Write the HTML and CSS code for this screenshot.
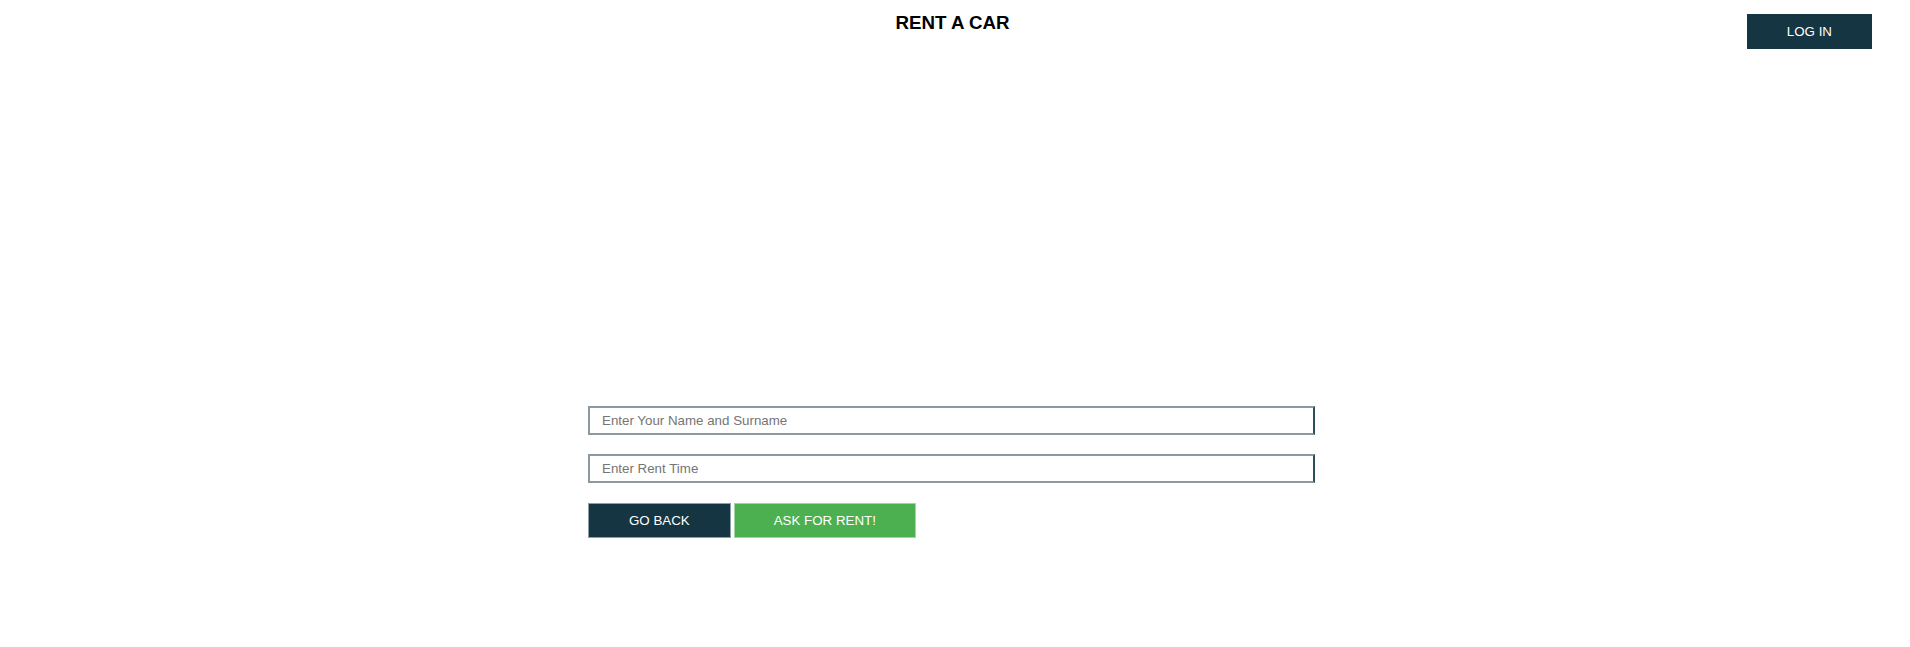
FILE: index.html
```html
<!DOCTYPE html>
<html lang="en">
<head>
<meta charset="utf-8">
<title>Rent a Car</title>
<link rel="stylesheet" href="styles.css">
</head>
<body>
<div class="page">
  <header class="topbar">
    <div class="spacer"></div>
    <h3 class="title">RENT A CAR</h3>
    <div class="actions">
      <button class="btn btn-dark btn-login" type="button">LOG IN</button>
    </div>
  </header>
  <main class="main">
    <form class="rent-form">
      <input class="field" type="text" placeholder="Enter Your Name and Surname">
      <input class="field" type="text" placeholder="Enter Rent Time">
      <div class="buttons">
        <button class="btn btn-dark btn-bordered" type="button">GO BACK</button>
        <button class="btn btn-green btn-bordered" type="button">ASK FOR RENT!</button>
      </div>
    </form>
  </main>
</div>
</body>
</html>
```

FILE: styles.css
```css
html, body {
  margin: 0;
  padding: 0;
  background: #ffffff;
}

body {
  font-family: "Liberation Sans", Arial, sans-serif;
  color: #000000;
}

.page {
  padding-right: 7px;
}

.topbar {
  display: grid;
  grid-template-columns: 1fr auto 1fr;
  align-items: start;
  padding: 14px 31px 0 38px;
}

.title {
  margin: 0 5px 0 0;
  font-size: 18.72px;
  font-weight: bold;
  line-height: 17px;
  color: #000000;
}

.actions {
  display: flex;
  justify-content: flex-end;
}

.btn {
  font-family: "Liberation Sans", Arial, sans-serif;
  font-size: 13.333px;
  line-height: 15px;
  color: #ffffff;
  border: none;
  padding: 10px 40px;
  margin: 0;
  cursor: pointer;
}

.btn-bordered {
  padding: 9px 40px;
  border: 1px solid;
}

.btn-dark {
  background: #163543;
}

.btn-dark.btn-bordered {
  border-color: #8e9ea4;
}

.btn-green {
  background: #4caf50;
}

.btn-green.btn-bordered {
  padding: 9px 39px;
  border-color: #9fd6a1;
}

.main {
  padding-top: 357px;
}

.rent-form {
  width: 727px;
  margin: 0 auto;
  display: flex;
  flex-direction: column;
}

.field {
  box-sizing: border-box;
  width: 100%;
  height: 29px;
  margin: 0;
  padding: 5px 12px;
  font-family: "Liberation Sans", Arial, sans-serif;
  font-size: 13.333px;
  border: 2px solid #8a9a9f;
  border-right-color: #2e4e5a;
  background: #ffffff;
  outline: none;
}

.field::placeholder {
  color: #757575;
}

.field + .field {
  margin-top: 19px;
}

.buttons {
  display: flex;
  gap: 3px;
  margin-top: 20px;
}
```
